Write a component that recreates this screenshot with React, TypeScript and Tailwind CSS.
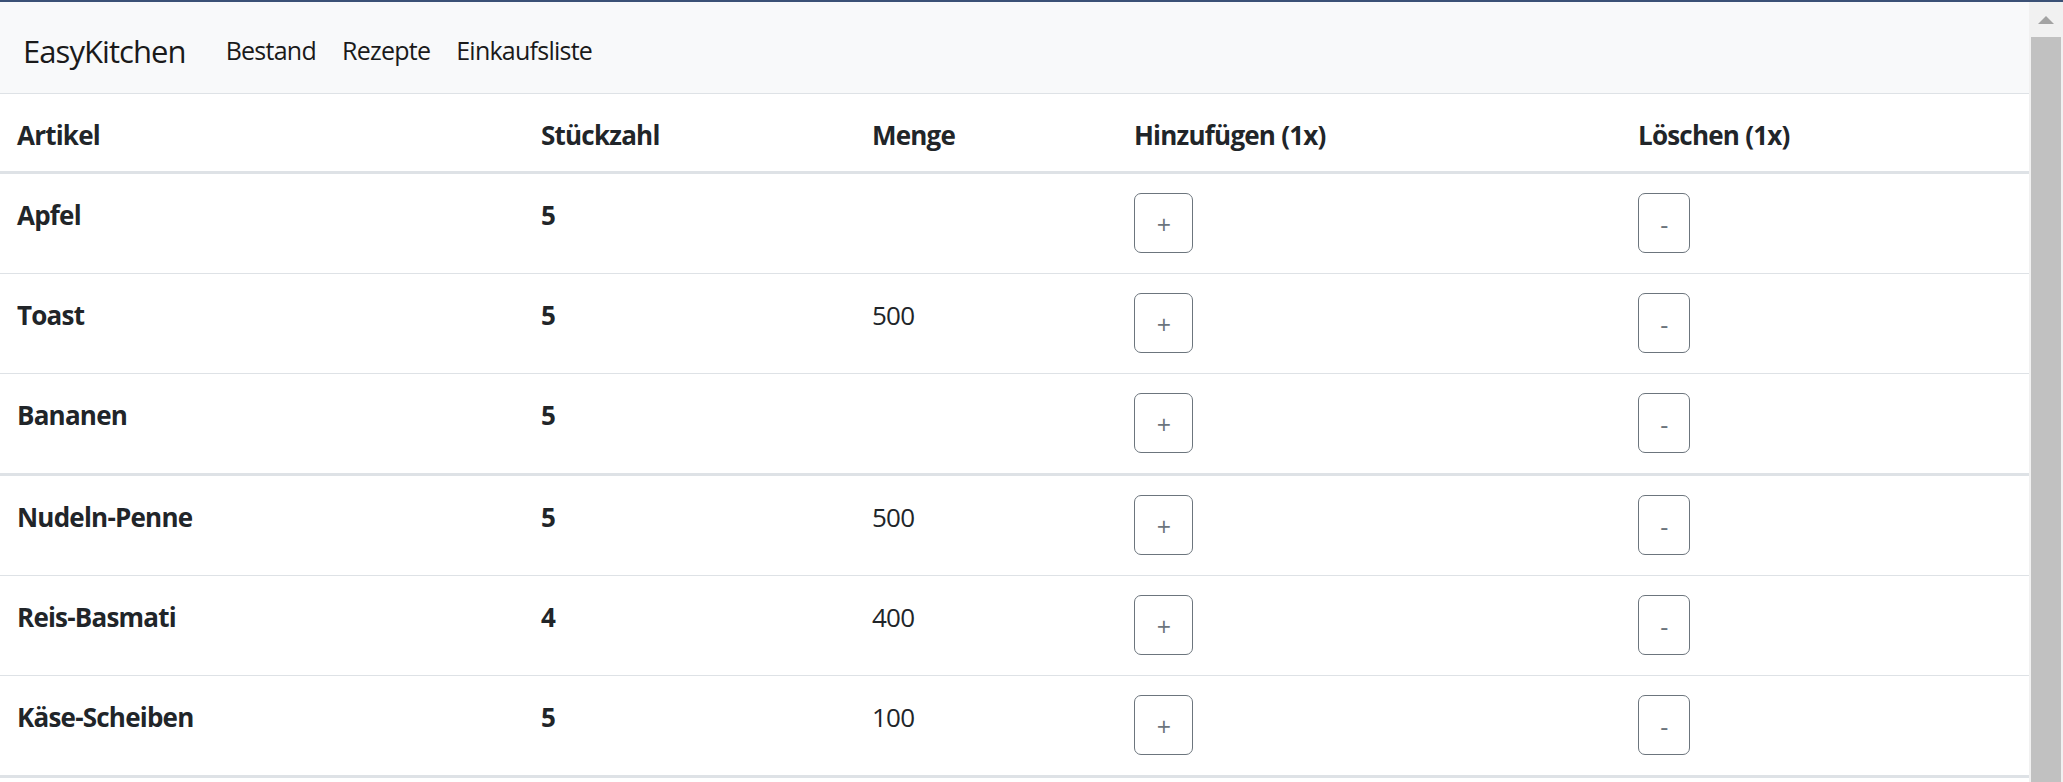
import React from "react";

type Item = {
  name: string;
  count: number;
  amount?: number;
  groupEnd?: boolean;
};

const items: Item[] = [
  { name: "Apfel", count: 5 },
  { name: "Toast", count: 5, amount: 500 },
  { name: "Bananen", count: 5, groupEnd: true },
  { name: "Nudeln-Penne", count: 5, amount: 500 },
  { name: "Reis-Basmati", count: 4, amount: 400 },
  { name: "Käse-Scheiben", count: 5, amount: 100, groupEnd: true },
];

const links = ["Bestand", "Rezepte", "Einkaufsliste"];

const Navbar = () => {
  return (
    <nav className="h-[92px] shrink-0 bg-[#f8f9fa] border-b border-[#dee2e6] flex items-center pl-[23px] pt-[6px]">
      <a className="text-[31px] leading-[46px] tracking-[-0.03em] text-[#1a1a1a] mr-[27px]">EasyKitchen</a>
      {links.map((link) => (
        <a key={link} className="text-[25px] leading-[39px] tracking-[-0.03em] text-[#1a1a1a] px-[13px]">
          {link}
        </a>
      ))}
    </nav>
  );
};

const Button = ({ label, wide }: { label: string; wide: boolean }) => {
  return (
    <button
      className={
        (wide ? "w-[59px]" : "w-[52px]") +
        " h-[60px] rounded-[7px] border border-[#6c757d] text-[#6c757d] text-[25px] leading-[39px] flex items-center justify-center pt-[3px]"
      }
    >
      {label}
    </button>
  );
};

const Inventory = () => {
  const head = "pl-[17px] pt-[22px] pb-[16px]";
  const text = "pl-[17px] pt-[22px] pb-[17px]";
  const cell = "pl-[17px] pt-[19px] pb-[20px]";
  return (
    <table className="w-full table-fixed border-collapse text-[26px] leading-[39px] tracking-[-0.03em] text-[#212529]">
      <colgroup>
        <col className="w-[524px]" />
        <col className="w-[331px]" />
        <col className="w-[262px]" />
        <col className="w-[504px]" />
        <col />
      </colgroup>
      <thead>
        <tr className="border-b-[3px] border-[#dee2e6] text-left font-bold align-top">
          <th className={head}>Artikel</th>
          <th className={head}>Stückzahl</th>
          <th className={head}>Menge</th>
          <th className={head}>Hinzufügen (1x)</th>
          <th className={head}>Löschen (1x)</th>
        </tr>
      </thead>
      <tbody>
        {items.map((item) => (
          <tr
            key={item.name}
            className={
              item.groupEnd
                ? "border-b-[3px] border-[#dee2e6] align-top"
                : "border-b border-[#dee2e6] align-top"
            }
          >
            <td className={text + " font-bold"}>{item.name}</td>
            <td className={text + " font-bold"}>{item.count}</td>
            <td className={text}>{item.amount ?? ""}</td>
            <td className={cell}>
              <Button label="+" wide />
            </td>
            <td className={cell}>
              <Button label="-" wide={false} />
            </td>
          </tr>
        ))}
      </tbody>
    </table>
  );
};

const Scrollbar = () => {
  return (
    <div className="w-[34px] shrink-0 bg-[#f1f1f1] flex flex-col items-center">
      <div className="h-[35px] w-full flex items-center justify-center">
        <div className="w-0 h-0 border-l-[8px] border-r-[8px] border-b-[8px] border-l-transparent border-r-transparent border-b-[#a3a3a3]" />
      </div>
      <div className="flex-1 w-[30px] bg-[#c1c1c1]" />
    </div>
  );
};

export default function App() {
  return (
    <div className="h-screen overflow-hidden border-t-2 border-[#3b5176] flex bg-white font-['Open_Sans',sans-serif]">
      <div className="flex-1 min-w-0 flex flex-col">
        <Navbar />
        <Inventory />
      </div>
      <Scrollbar />
    </div>
  );
}
